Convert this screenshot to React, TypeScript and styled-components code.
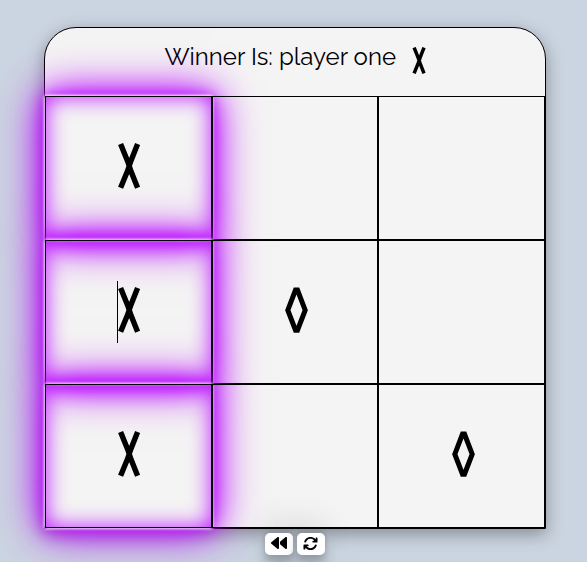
import React from "react";
import styled, { createGlobalStyle, css } from "styled-components";
import { FaArrowsRotate, FaBackward } from "react-icons/fa6";

const GlobalStyle = createGlobalStyle`
  * { box-sizing: border-box; }
  body {
    margin: 0;
    height: 562px;
    overflow: hidden;
    background: #cbd5e1;
    font-family: Raleway, Lato, sans-serif;
    color: #000;
  }
`;

const Page = styled.main`
  display: flex;
  flex-direction: column;
  align-items: center;
  width: 587px;
  height: 562px;
  padding: 27px 0 0 3px;
`;

const Board = styled.section`
  width: 502px;
  height: 502px;
  border: 1px solid #000;
  border-radius: 32px 32px 0 0;
  background: #f4f4f4;
  box-shadow: rgba(0, 0, 0, 0.35) 0 5px 17px;
`;

const Header = styled.h1`
  display: flex;
  justify-content: center;
  align-items: center;
  height: 68px;
  margin: 0;
  padding-bottom: 11px;
  font-size: 24px;
  font-weight: 400;
`;

const Title = styled.span`
  width: 231px;
  margin-left: 1px;
  white-space: nowrap;
`;

const HeaderMark = styled.span`
  display: flex;
  margin: 8px 1px 0 16px;
`;

const Grid = styled.div`
  display: grid;
  grid-template-columns: repeat(3, 1fr);
  grid-template-rows: repeat(3, 144px);
`;

const Cell = styled.div<{ $win?: boolean }>`
  display: flex;
  justify-content: center;
  align-items: center;
  position: relative;
  border: 1px solid #000;
  padding-left: 2px;
  padding-bottom: 5px;
  ${(p) =>
    p.$win &&
    css`
      box-shadow: 0 0 3.2px #fff, 0 0 3.2px #fff, 0 0 32px #bc13fe,
        0 0 12.8px #bc13fe, 0 0 44.8px #bc13fe, inset 0 0 20.8px #bc13fe;
    `}
`;

const Caret = styled.i`
  position: absolute;
  left: 71px;
  top: 40px;
  width: 1px;
  height: 62px;
  background: #000;
`;

const Controls = styled.nav`
  display: flex;
  gap: 4px;
  margin-top: 4px;
`;

const Button = styled.button`
  display: flex;
  justify-content: center;
  align-items: center;
  width: 28px;
  height: 22px;
  padding: 0 1px 2px 0;
  border: 0;
  border-radius: 5px;
  background: #fff;
  color: #000;
  box-shadow: rgba(0, 0, 0, 0.25) 0 54px 55px,
    rgba(0, 0, 0, 0.12) 0 -12px 30px, rgba(0, 0, 0, 0.12) 0 4px 6px,
    rgba(0, 0, 0, 0.17) 0 12px 13px, rgba(0, 0, 0, 0.09) 0 -3px 5px;
`;

type MarkKind = "x" | "o";

function Mark({ kind, small }: { kind: MarkKind; small?: boolean }) {
  return (
    <svg
      width={small ? 14 : 24}
      height={small ? 27 : 46}
      viewBox="0 0 24 46"
      preserveAspectRatio="none"
      fill="none"
      stroke="#000"
      strokeWidth={small ? 6 : 5.4}
    >
      {kind === "x" ? (
        <path d="M3.6 1 10.5 18Q12.2 23 13.9 28L20.6 44.8M20.6 1 13.9 18Q12.2 23 10.5 28L3.6 44.8" />
      ) : (
        <path strokeWidth="5" d="M11.5 3h2L21.2 23.2 13.5 43.2h-2L3.8 23.2Z" />
      )}
    </svg>
  );
}

const cells: { mark?: MarkKind; win?: boolean; caret?: boolean }[] = [
  { mark: "x", win: true },
  {},
  {},
  { mark: "x", win: true, caret: true },
  { mark: "o" },
  {},
  { mark: "x", win: true },
  {},
  { mark: "o" },
];

export default function App() {
  return (
    <Page>
      <GlobalStyle />
      <Board>
        <Header>
          <Title>Winner Is: player one</Title>
          <HeaderMark>
            <Mark kind="x" small />
          </HeaderMark>
        </Header>
        <Grid>
          {cells.map((c, i) => (
            <Cell key={i} $win={c.win}>
              {c.caret && <Caret />}
              {c.mark && <Mark kind={c.mark} />}
            </Cell>
          ))}
        </Grid>
      </Board>
      <Controls>
        <Button aria-label="Undo">
          <FaBackward size={16} />
        </Button>
        <Button aria-label="Restart">
          <FaArrowsRotate size={15} />
        </Button>
      </Controls>
    </Page>
  );
}
